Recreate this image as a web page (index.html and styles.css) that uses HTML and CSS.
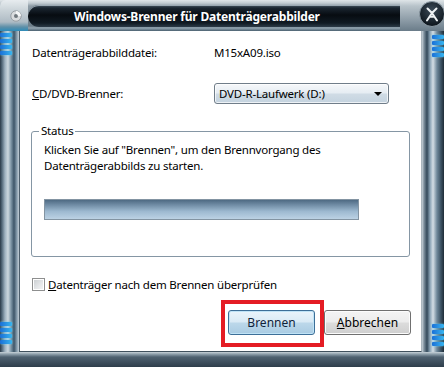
FILE: index.html
```html
<!DOCTYPE html>
<html lang="de">
<head>
<meta charset="utf-8">
<title>Windows-Brenner für Datenträgerabbilder</title>
<link rel="stylesheet" href="styles.css">
</head>
<body>
<div class="window">
  <div class="titlebar">
    <div class="tb-left">
      <svg class="app-icon" width="12" height="12" viewBox="0 0 12 12">
        <circle cx="6" cy="6" r="5.2" fill="#d9dcde" stroke="#8b9297" stroke-width="0.8"/>
        <circle cx="6" cy="6" r="2" fill="#6f777c"/>
        <path d="M6 1 A5 5 0 0 1 11 6 L8 6 A2 2 0 0 0 6 4 Z" fill="#f4f6f7"/>
      </svg>
    </div>
    <div class="tb-band"><span class="title">Windows-Brenner für Datenträgerabbilder</span></div>
    <div class="tb-right">
      <svg class="close" width="26" height="26" viewBox="0 0 26 26">
        <defs>
          <radialGradient id="cg" cx="50%" cy="35%" r="65%">
            <stop offset="0" stop-color="#3b4a57"/>
            <stop offset="1" stop-color="#0c141b"/>
          </radialGradient>
        </defs>
        <circle cx="13" cy="13" r="12.5" fill="url(#cg)" stroke="#8c9aa4" stroke-width="1"/>
        <path d="M8.5 7.5 L13 12 L17.5 7.5 M13 12 L8 19.5 M13 12 L18 19.5 M10.5 15.8 L15.5 15.8" stroke="#eef2f4" stroke-width="2" fill="none" stroke-linecap="round"/>
      </svg>
    </div>
  </div>
  <div class="middle">
    <div class="frame-l">
      <div class="glow glow-top"><i></i><i></i><i></i><i></i></div>
      <div class="glow glow-bottom"><i></i><i></i><i></i><i></i></div>
    </div>
    <div class="client">
      <div class="row row-file">
        <span class="label">Datenträgerabbilddatei:</span>
        <span class="value">M15xA09.iso</span>
      </div>
      <div class="row row-drive">
        <span class="label"><u>C</u>D/DVD-Brenner:</span>
        <div class="select"><span>DVD-R-Laufwerk (D:)</span><span class="arrow"></span></div>
      </div>
      <fieldset class="status">
        <legend>Status</legend>
        <p class="msg">Klicken Sie auf "Brennen", um den Brennvorgang des Datenträgerabbilds zu starten.</p>
        <div class="progress"></div>
      </fieldset>
      <div class="row row-check">
        <span class="checkbox"></span>
        <span class="check-label"><u>D</u>atenträger nach dem Brennen überprüfen</span>
      </div>
      <div class="buttons">
        <span class="highlight"><button class="btn btn-default">Brennen</button></span>
        <button class="btn btn-cancel"><u>A</u>bbrechen</button>
      </div>
    </div>
    <div class="frame-r">
      <div class="glow glow-top"><i></i><i></i><i></i><i></i></div>
      <div class="glow glow-bottom"><i></i><i></i><i></i><i></i></div>
    </div>
  </div>
  <div class="frame-b"></div>
</div>
</body>
</html>
```

FILE: styles.css
```css
* { box-sizing: border-box; }
html, body { margin: 0; padding: 0; }
body {
  width: 444px;
  height: 367px;
  overflow: hidden;
  background: #2a3844;
  font-family: "Noto Sans", "DejaVu Sans", sans-serif;
  font-size: 11.5px;
  letter-spacing: -0.2px;
  color: #000;
}
.window {
  width: 444px;
  height: 367px;
  display: flex;
  flex-direction: column;
}

/* title bar */
.titlebar {
  height: 31px;
  display: flex;
  background: linear-gradient(180deg, #dfe5e8 0px, #c3ccd2 3px, #8e9ca6 6px, #6d7e8a 26px, #93a5b1 28px, #4a6070 31px);
}
.tb-left {
  width: 28px;
  background: linear-gradient(180deg, #e7ecef 0px, #cbd4d9 10px, #aebbc4 22px, #5d8fa8 27px, #2d8bb8 31px);
  border-radius: 6px 0 0 0;
  padding: 10px 0 0 10px;
}
.app-icon { display: block; }
.tb-band {
  flex: 1;
  margin: 5px 0 4px 0;
  border-radius: 11px 0 0 11px;
  background: linear-gradient(180deg, #4b5a66 0px, #1a2530 3px, #070c11 10px, #101a23 18px, #2c3b48 22px);
  box-shadow: inset 0 1px 0 #9aa8b2;
  padding-left: 46px;
  display: flex;
  align-items: center;
}
.title {
  color: #fff;
  font-weight: bold;
  font-size: 12px;
  letter-spacing: -0.2px;
  white-space: nowrap;
}
.tb-right {
  width: 44px;
  background: linear-gradient(180deg, #dfe5e8 0px, #b8c3ca 6px, #8d9ca7 20px, #6a7c89 31px);
  display: flex;
  justify-content: flex-end;
  align-items: flex-start;
  padding: 1px 0 0 0;
}
.close { display: block; margin-right: -1px; }

/* middle */
.middle {
  flex: 1;
  display: flex;
}
.frame-l, .frame-r { position: relative; }
.frame-l {
  width: 19px;
  background: linear-gradient(90deg, #2a3a48 0px, #54697a 2px, #9fb2c0 5px, #cdd8df 8px, #7f97a7 11px, #3d5568 14px, #8aa0b0 17px, #c3ced6 19px);
}
.frame-r {
  width: 22px;
  background: linear-gradient(90deg, #c7d1d8 0px, #7d8f9c 2px, #33495a 5px, #8aa3b5 8px, #d4dee5 11px, #6e8799 15px, #3c5263 19px, #1f2c37 22px);
}
.glow {
  position: absolute;
  display: flex;
  flex-direction: column;
  gap: 2px;
}
.glow i {
  display: block;
  height: 4px;
  background: linear-gradient(90deg, #1a6fd6, #38b6f0);
  border-radius: 1px;
  box-shadow: 0 0 2px #5fd2ff;
}
.frame-l .glow { left: 0; width: 12px; }
.frame-r .glow { right: 0; width: 12px; }
.frame-l .glow-top { top: 2px; }
.frame-l .glow-bottom { bottom: 8px; }
.frame-r .glow-top { top: 4px; }
.frame-r .glow-bottom { bottom: 6px; }

.client {
  flex: 1;
  background: #fff;
  border-left: 1px solid #4c5e6c;
  border-right: 1px solid #aab6be;
  border-bottom: 1px solid #3f505d;
  padding: 13px 10px 0 12px;
  display: flex;
  flex-direction: column;
}
.frame-b {
  height: 15px;
  background: linear-gradient(180deg, #c9d3d9 0px, #90a1ad 2px, #4e6170 5px, #2e3e4b 15px);
}

/* rows */
.row { display: flex; align-items: center; }
.label { width: 182px; }
.row-file { height: 16px; }
.row-drive { height: 21px; margin-top: 23px; }
.select {
  width: 175px;
  height: 21px;
  border: 1px solid #707d89;
  border-radius: 3px;
  background: linear-gradient(180deg, #f6f8fa 0%, #e6edf3 45%, #cfdbe5 55%, #c4d3df 100%);
  box-shadow: inset 0 0 0 1px rgba(255,255,255,0.7);
  display: flex;
  align-items: center;
  justify-content: space-between;
  padding: 0 6px 0 4px;
}
.arrow {
  width: 0; height: 0;
  border-left: 4px solid transparent;
  border-right: 4px solid transparent;
  border-top: 4px solid #000;
}

/* status group */
.status {
  margin: 20px 0 0 -1px;
  width: 379px;
  height: 133px;
  border: 1px solid #8596a4;
  border-radius: 3px;
  padding: 4px 12px 0 12px;
}
.status legend {
  padding: 0 2px;
  margin-left: -5px;
  line-height: 14px;
}
.msg {
  margin: 0;
  line-height: 16px;
  width: 320px;
}
.progress {
  margin-top: 25px;
  width: 315px;
  height: 21px;
  border: 1px solid #8394a2;
  background: linear-gradient(180deg, #4e6a83 0%, #6f8ba4 25%, #9db9d0 60%, #bcd2e4 100%);
}

/* checkbox */
.row-check { margin-top: 20px; height: 14px; }
.checkbox {
  width: 13px;
  height: 13px;
  border: 1px solid #8e8f8f;
  background: linear-gradient(135deg, #c8cccf 0%, #e6e8ea 60%, #f4f5f6 100%);
  box-shadow: inset 0 0 0 1px #fff;
  margin-right: 3px;
}

/* buttons */
.buttons {
  display: flex;
  justify-content: flex-end;
  align-items: flex-start;
  margin-top: 9px;
}
.highlight {
  display: block;
  border: 4px solid #e41c24;
  padding: 6px 5px 8px 3px;
}
.btn {
  display: block;
  width: 87px;
  height: 25px;
  font: inherit;
  font-size: 12px;
  color: #000;
  border-radius: 3px;
  padding: 0;
}
.btn-default {
  border: 1px solid #3d6f98;
  background: linear-gradient(180deg, #eaf4fb 0%, #d9eaf5 48%, #bcd8ea 52%, #a9cbe2 100%);
  box-shadow: inset 0 0 0 1px #bfe3f6;
  color: #10233a;
}
.btn-cancel {
  margin-top: 10px;
  border: 1px solid #707070;
  background: linear-gradient(180deg, #f4f4f4 0%, #ececec 48%, #dcdcdc 52%, #cfcfcf 100%);
  box-shadow: inset 0 0 0 1px #fcfcfc;
}
```
